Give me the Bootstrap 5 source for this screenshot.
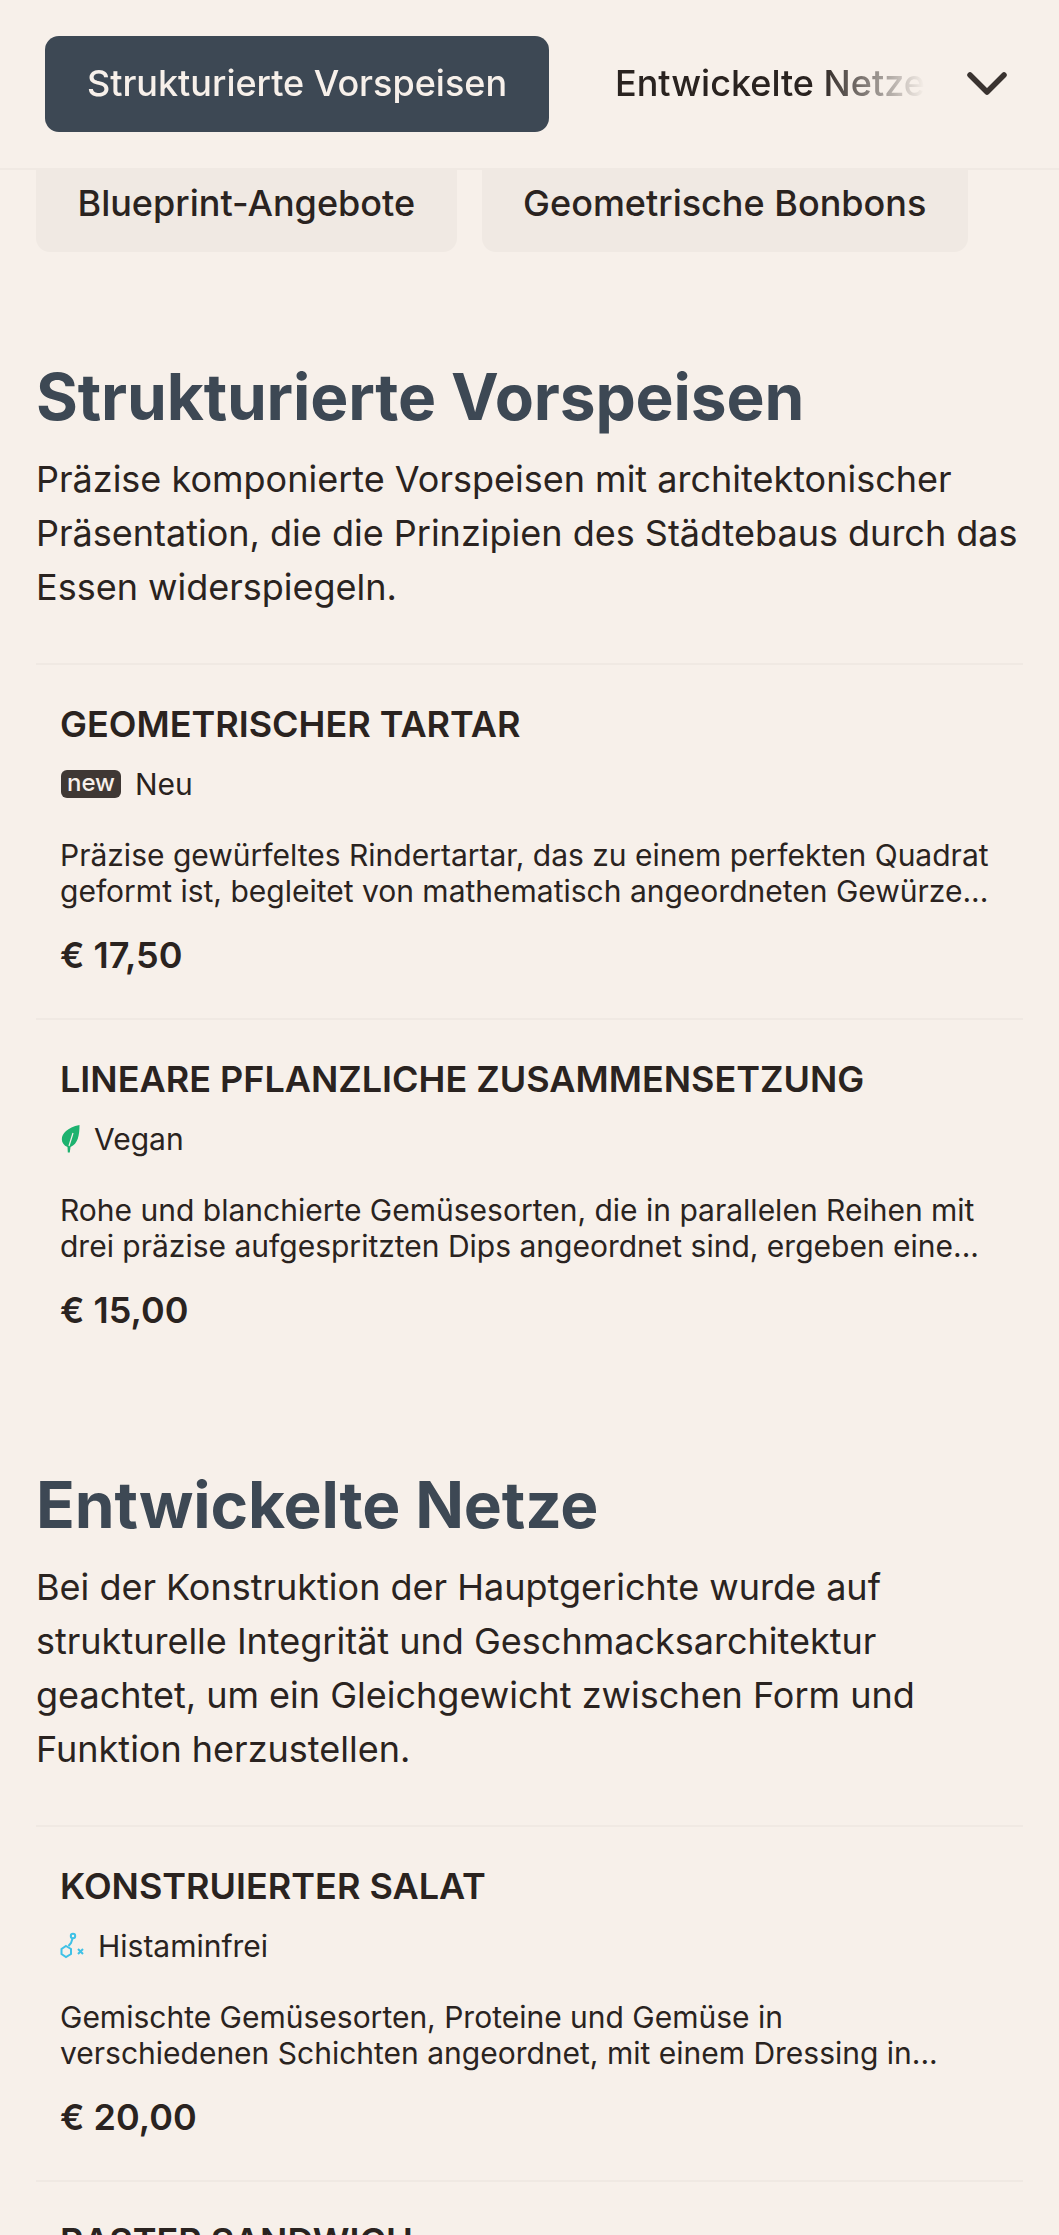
<!DOCTYPE html>
<html lang="de"><head><meta charset="utf-8"><title>Menü</title>
<link href="https://cdn.jsdelivr.net/npm/bootstrap@5.3.0/dist/css/bootstrap.min.css" rel="stylesheet">
<style>
html,body{height:2235px;overflow:hidden}
body{background:#f7f0ea;color:#2a2320;font-family:Inter,"Liberation Sans",sans-serif}
.topbar{height:170px;background:#f7f0ea;border-bottom:2px solid #f0e9e3;padding:36px 36px 0 45px;z-index:10}
.tabrow{height:96px;flex:1 1 auto;min-width:0;overflow:hidden;gap:36px;-webkit-mask-image:linear-gradient(to right,#000 775px,transparent 880px);mask-image:linear-gradient(to right,#000 775px,transparent 880px)}
.tabactive,.tabidle{height:96px;font-size:36px;font-weight:500;line-height:94px;white-space:nowrap;flex:none}
.tabactive{background:#3d4854;color:#f7f0ea;width:504px;text-align:center;border-radius:14px}
.tabidle{padding:0 0 0 30px}
.chevbox{width:60px;flex:none}
.chips{margin:-14px 0 0;padding:0 36px;gap:25px;position:relative}
.chip{background:#f0e9e3;border-radius:14px;height:96px;line-height:94px;font-size:36px;font-weight:500;padding:0 41.5px;white-space:nowrap}
.sect{padding:0 36px}
.h-sect{font-size:64px;font-weight:700;letter-spacing:-.15px;color:#3d4854;line-height:76px;margin:0}
.p-sect{font-size:36px;line-height:54px;margin:16.5px 0 49.5px}
.dish{border-top:2px solid #f0e9e3;padding:29px 24px 0;height:355px}
.dish-t{font-size:36px;font-weight:600;line-height:60px;margin:0}
.dish-tag{font-size:30px;line-height:40px;margin-top:10px;gap:14px}
.newbox{background:#3f3834;color:#f7f0ea;font-size:24px;font-weight:500;line-height:26px;height:28px;width:60px;margin-left:1px;text-align:center;border-radius:6px}
.dish-d{font-size:30px;line-height:36px;margin:32.5px 0 0}
.dish-p{font-size:36px;font-weight:600;line-height:44px;margin:24px 0 0}
</style></head><body>
<header class="topbar sticky-top d-flex">
<div class="tabrow d-flex"><div class="tabactive">Strukturierte Vorspeisen</div><div class="tabidle">Entwickelte Netze</div></div>
<div class="chevbox"><svg width="60" height="96" viewBox="0 0 60 96"><path d="M7 39 24 56 41 39" fill="none" stroke="#3a3330" stroke-width="5.5" stroke-linecap="round" stroke-linejoin="round"/></svg></div>
</header>
<div class="chips d-flex"><div class="chip">Blueprint-Angebote</div><div class="chip">Geometrische Bonbons</div></div>
<section class="sect" style="margin-top:107px">
<h2 class="h-sect">Strukturierte Vorspeisen</h2>
<p class="p-sect">Präzise komponierte Vorspeisen mit architektonischer Präsentation, die die Prinzipien des Städtebaus durch das Essen widerspiegeln.</p>
<div class="dish">
<h3 class="dish-t">GEOMETRISCHER TARTAR</h3>
<div class="dish-tag d-flex align-items-center"><span class="newbox">new</span>Neu</div>
<p class="dish-d">Präzise gewürfeltes Rindertartar, das zu einem perfekten Quadrat geformt ist, begleitet von mathematisch angeordneten Gewürze...</p>
<div class="dish-p">€ 17,50</div></div>
<div class="dish">
<h3 class="dish-t">LINEARE PFLANZLICHE ZUSAMMENSETZUNG</h3>
<div class="dish-tag d-flex align-items-center"><svg width="20" height="28" viewBox="0 0 20 28"><path d="M19.5 0C19.5 10 18 19 10.5 22L9.8 27.5H7.8L7.5 22C-2 18-.5 4 19.5 0Z" fill="#1db26f"/><path d="M9 21 13 8" stroke="#f7f0ea" stroke-width="1.2" fill="none"/></svg>Vegan</div>
<p class="dish-d">Rohe und blanchierte Gemüsesorten, die in parallelen Reihen mit drei präzise aufgespritzten Dips angeordnet sind, ergeben eine...</p>
<div class="dish-p">€ 15,00</div></div>
</section>
<section class="sect" style="margin-top:94px">
<h2 class="h-sect">Entwickelte Netze</h2>
<p class="p-sect">Bei der Konstruktion der Hauptgerichte wurde auf strukturelle Integrität und Geschmacksarchitektur geachtet, um ein Gleichgewicht zwischen Form und Funktion herzustellen.</p>
<div class="dish">
<h3 class="dish-t">KONSTRUIERTER SALAT</h3>
<div class="dish-tag d-flex align-items-center"><svg width="24" height="28" viewBox="0 0 24 28" fill="none" stroke="#3fc1e6" stroke-width="2"><circle cx="13" cy="4" r="2.2"/><path d="M12.5 6.5 11 11 8.5 14"/><path d="M6 14 11 17V22L6 25 1.5 22V17Z"/><path d="M18 17l5 5M23 17l-5 5"/></svg>Histaminfrei</div>
<p class="dish-d">Gemischte Gemüsesorten, Proteine und Gemüse in verschiedenen Schichten angeordnet, mit einem Dressing in...</p>
<div class="dish-p">€ 20,00</div></div>
<div class="dish">
<h3 class="dish-t">RASTER SANDWICH</h3></div>
</section>
</body></html>
